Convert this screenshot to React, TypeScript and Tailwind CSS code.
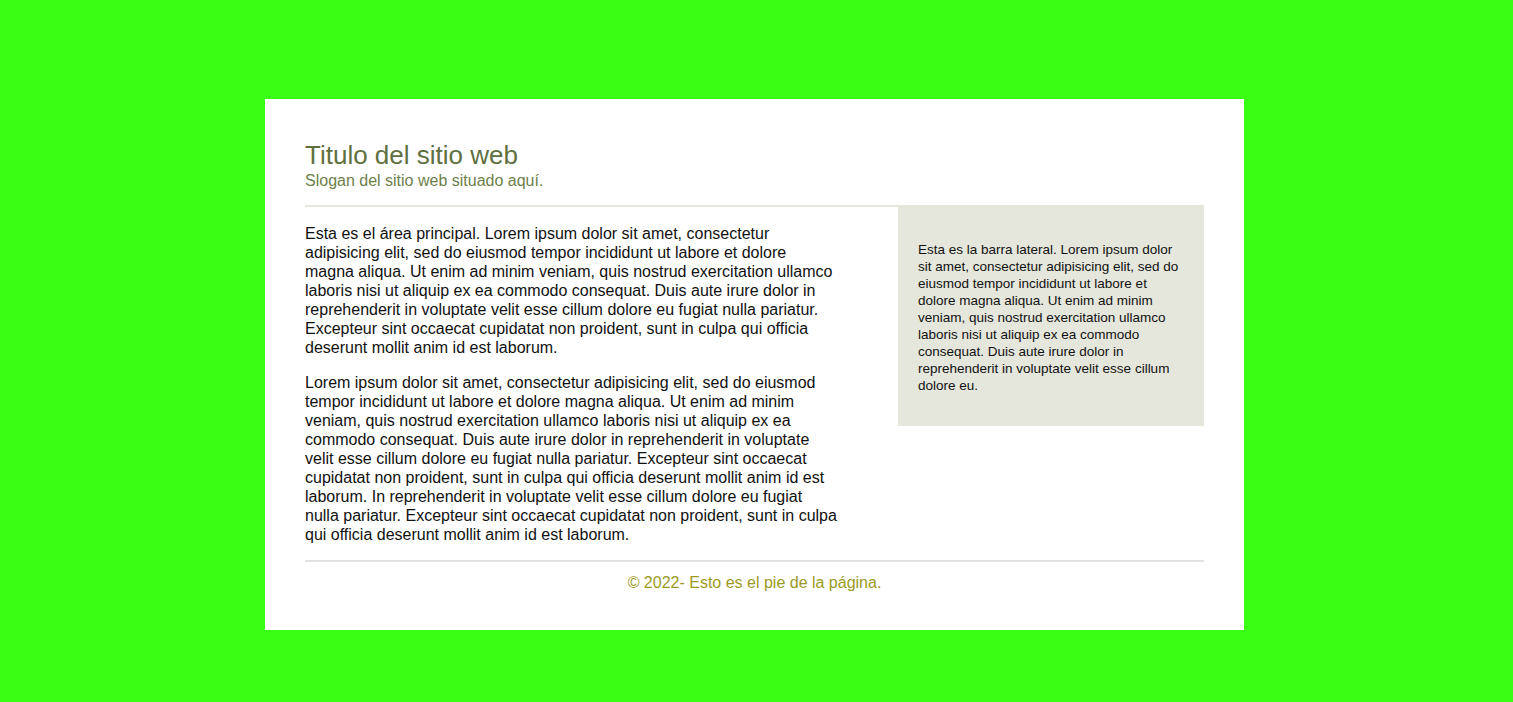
export default function App() {
  return (
    <div className="min-h-screen bg-[#3aff14] pt-[99px] pr-[4px] pb-[72px] font-['Liberation_Sans',Arial,sans-serif]">
      <div className="mx-auto w-[979px] bg-white px-10 pt-[41px] pb-[38px]">
        {/* Header */}
        <header className="border-b-2 border-[#e5e7dc] pb-[15px]">
          <h1 className="text-[26px] leading-[31px] text-[#5f7040]">Titulo del sitio web</h1>
          <p className="text-[16px] leading-[19px] text-[#6e7f4a]">Slogan del sitio web situado aquí.</p>
        </header>

        <div className="-mt-[1px] flex justify-between">
          {/* Main */}
          <main className="w-[545px] pt-[18px] text-[16px] leading-[19px] text-[#111]">
            <p className="mb-4">
              Esta es el área principal. Lorem ipsum dolor sit amet, consectetur<br />
              adipisicing elit, sed do eiusmod tempor incididunt ut labore et dolore<br />
              magna aliqua. Ut enim ad minim veniam, quis nostrud exercitation ullamco<br />
              laboris nisi ut aliquip ex ea commodo consequat. Duis aute irure dolor in<br />
              reprehenderit in voluptate velit esse cillum dolore eu fugiat nulla pariatur.<br />
              Excepteur sint occaecat cupidatat non proident, sunt in culpa qui officia<br />
              deserunt mollit anim id est laborum.
            </p>
            <p className="mb-[16px]">
              Lorem ipsum dolor sit amet, consectetur adipisicing elit, sed do eiusmod<br />
              tempor incididunt ut labore et dolore magna aliqua. Ut enim ad minim<br />
              veniam, quis nostrud exercitation ullamco laboris nisi ut aliquip ex ea<br />
              commodo consequat. Duis aute irure dolor in reprehenderit in voluptate<br />
              velit esse cillum dolore eu fugiat nulla pariatur. Excepteur sint occaecat<br />
              cupidatat non proident, sunt in culpa qui officia deserunt mollit anim id est<br />
              laborum. In reprehenderit in voluptate velit esse cillum dolore eu fugiat<br />
              nulla pariatur. Excepteur sint occaecat cupidatat non proident, sunt in culpa<br />
              qui officia deserunt mollit anim id est laborum.
            </p>
          </main>

          {/* Sidebar */}
          <aside className="self-start w-[306px] bg-[#e5e7dc] px-5 pt-[35px] pb-[32px] text-[13.5px] leading-[17px] text-[#111] whitespace-nowrap">
            <p>
              Esta es la barra lateral. Lorem ipsum dolor<br />
              sit amet, consectetur adipisicing elit, sed do<br />
              eiusmod tempor incididunt ut labore et<br />
              dolore magna aliqua. Ut enim ad minim<br />
              veniam, quis nostrud exercitation ullamco<br />
              laboris nisi ut aliquip ex ea commodo<br />
              consequat. Duis aute irure dolor in<br />
              reprehenderit in voluptate velit esse cillum<br />
              dolore eu.
            </p>
          </aside>
        </div>

        {/* Footer */}
        <footer className="border-t-2 border-[#e2e2e2] pt-[11px] text-center text-[16px] leading-[19px] text-[#9c9a1e]">
          © 2022- Esto es el pie de la página.
        </footer>
      </div>
    </div>
  )
}
